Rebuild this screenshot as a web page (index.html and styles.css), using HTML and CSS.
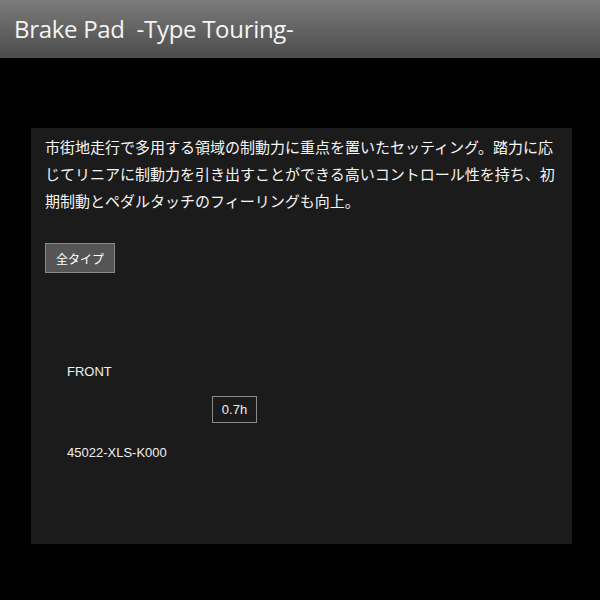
FILE: index.html
```html
<!DOCTYPE html>
<html lang="ja">
<head>
<meta charset="utf-8">
<link rel="stylesheet" href="styles.css">
</head>
<body>
<header class="page-header">
  <h1 class="title">Brake Pad&nbsp; -Type Touring-</h1>
</header>
<main class="panel">
  <p class="lead">市街地走行で多用する領域の制動力に重点を置いたセッティング。踏力に応じてリニアに制動力を引き出すことができる高いコントロール性を持ち、初期制動とペダルタッチのフィーリングも向上。</p>
  <div class="tabs"><span class="tab">全タイプ</span></div>
  <div class="spec">
    <div class="pos">FRONT</div>
    <div class="time-row"><span class="time">0.7h</span></div>
    <div class="part">45022-XLS-K000</div>
  </div>
</main>
</body>
</html>
```

FILE: styles.css
```css
html, body {
  margin: 0;
  padding: 0;
  background: #000;
}
body {
  width: 600px;
  height: 600px;
  color: #f0f0f0;
  font-family: "Liberation Sans", "Noto Sans CJK JP", sans-serif;
}
.page-header {
  height: 58px;
  background: linear-gradient(to bottom, #7c7c7c 0%, #5e5e5e 60%, #4c4c4c 100%);
  display: flex;
  align-items: center;
  padding-left: 14px;
  box-sizing: border-box;
}
.title {
  margin: 0;
  font-family: "Open Sans", sans-serif;
  font-weight: 400;
  font-size: 24px;
  letter-spacing: -0.3px;
  color: #f4f4f4;
  padding-bottom: 2px;
}
.panel {
  margin: 70px 0 0 31px;
  width: 541px;
  height: 416px;
  background: #1b1b1b;
  box-sizing: border-box;
  padding: 5px 16px 0 14px;
}
.lead {
  margin: 0;
  font-family: "Noto Sans CJK JP", sans-serif;
  font-size: 15px;
  line-height: 27px;
  color: #f6f6f6;
}
.tabs {
  margin-top: 29px;
  display: flex;
}
.tab {
  display: inline-flex;
  align-items: center;
  justify-content: center;
  width: 70px;
  height: 30px;
  box-sizing: border-box;
  background: #555;
  border: 1px solid #8a8a8a;
  font-family: "Noto Sans CJK JP", sans-serif;
  font-size: 12px;
  color: #fff;
}
.spec {
  margin-top: 89px;
  padding-left: 22px;
  font-size: 13px;
  line-height: 20px;
}
.time-row {
  margin-top: 14px;
  padding-left: 145px;
  display: flex;
}
.time {
  display: inline-flex;
  align-items: center;
  justify-content: center;
  width: 45px;
  height: 27px;
  box-sizing: border-box;
  border: 1px solid #8a8a8a;
}
.part {
  margin-top: 20px;
}
```
